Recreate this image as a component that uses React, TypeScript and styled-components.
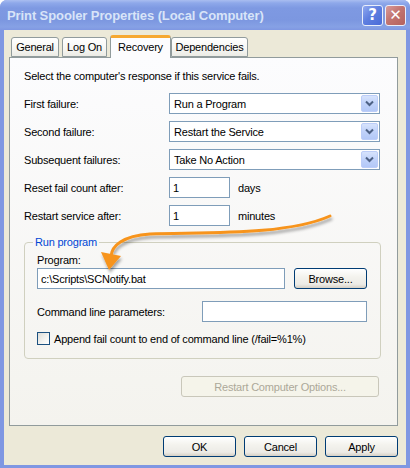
import React from "react";
import styled, { createGlobalStyle } from "styled-components";

const GlobalStyle = createGlobalStyle`
  html, body { margin: 0; padding: 0; background: #ffffff; }
  * { box-sizing: border-box; }
`;

const Window = styled.div`
  width: 410px;
  height: 468px;
  display: flex;
  flex-direction: column;
  background: #7f97e2;
  font-family: "Liberation Sans", Arial, sans-serif;
  font-size: 11px;
  letter-spacing: -0.2px;
  color: #000;
  overflow: hidden;
  border-radius: 7px 7px 0 0;
`;

const TitleBar = styled.div`
  height: 30px;
  flex: none;
  display: flex;
  align-items: center;
  padding: 0 4px 0 7px;
  background: linear-gradient(
    to bottom,
    #a9bdf0 0px,
    #8ea8ea 3px,
    #7e99e2 8px,
    #7c97e0 20px,
    #86a1e5 27px,
    #7f97e2 30px
  );
`;

const Title = styled.div`
  flex: 1;
  font-weight: bold;
  font-size: 13px;
  color: #d8e4f8;
  letter-spacing: -0.1px;
`;

const CaptionButton = styled.div<{ $close?: boolean }>`
  width: 21px;
  height: 21px;
  margin-left: 2px;
  border-radius: 3px;
  border: 1px solid #e9eefb;
  display: flex;
  align-items: center;
  justify-content: center;
  color: #fff;
  font-weight: bold;
  font-size: 15px;
  letter-spacing: 0;
  font-family: "DejaVu Sans", sans-serif;
  background: ${(p) =>
    p.$close
      ? "linear-gradient(135deg, #d99b9a 0%, #c27470 45%, #b4625e 100%)"
      : "linear-gradient(135deg, #90a9f0 0%, #5f7fe0 45%, #4a6bd8 100%)"};
`;

const Body = styled.div`
  flex: 1;
  margin: 0 4px 3px 4px;
  background: #ece9d8;
  padding: 5px 8px 0 5px;
  display: flex;
  flex-direction: column;
`;

const TabRow = styled.div`
  display: flex;
  align-items: flex-end;
  height: 22px;
  padding-left: 2px;
  position: relative;
  z-index: 1;
`;

const Tab = styled.div<{ $w: number; $active?: boolean }>`
  width: ${(p) => p.$w}px;
  height: ${(p) => (p.$active ? 23 : 20)}px;
  margin-right: ${(p) => (p.$active ? 0 : 3)}px;
  margin-bottom: ${(p) => (p.$active ? -1 : 0)}px;
  border: 1px solid #919b9c;
  border-bottom: ${(p) => (p.$active ? "none" : "1px solid #919b9c")};
  border-top: ${(p) => (p.$active ? "3px solid #f6a831" : "1px solid #919b9c")};
  border-radius: 3px 3px 0 0;
  display: flex;
  align-items: center;
  justify-content: center;
  padding-bottom: ${(p) => (p.$active ? 3 : 0)}px;
  background: ${(p) =>
    p.$active
      ? "#fcfcfe"
      : "linear-gradient(to bottom, #ffffff 0%, #f6f6f3 60%, #ecebe5 100%)"};
`;

const Panel = styled.div`
  width: 389px;
  height: 369px;
  border: 1px solid #919b9c;
  background: linear-gradient(to bottom, #fcfcfe 0%, #f4f3ee 100%);
  padding: 11px 17px 0 14px;
  display: flex;
  flex-direction: column;
`;

const Intro = styled.div`
  line-height: 14px;
  margin-bottom: 10px;
`;

const FormGrid = styled.div`
  display: grid;
  grid-template-columns: 145px 1fr;
  row-gap: 7px;
  align-items: center;
`;

const Label = styled.div`
  line-height: 14px;
`;

const Combo = styled.div`
  height: 21px;
  border: 1px solid #7f9db9;
  background: #fff;
  display: flex;
  align-items: center;
  padding: 1px 1px 1px 4px;
`;

const ComboText = styled.div`
  flex: 1;
`;

const ComboButton = styled.div`
  width: 17px;
  height: 17px;
  border: 1px solid #bccdf8;
  border-radius: 2px;
  background: linear-gradient(to bottom, #d7e3fc 0%, #c0d2fa 50%, #b3c8f7 100%);
  display: flex;
  align-items: center;
  justify-content: center;
`;

const InlineRow = styled.div`
  display: flex;
  align-items: center;
  gap: 8px;
`;

const TextInput = styled.div<{ $w: number }>`
  width: ${(p) => p.$w}px;
  height: 21px;
  border: 1px solid #7f9db9;
  background: #fff;
  display: flex;
  align-items: center;
  padding-left: 3px;
`;

const Group = styled.fieldset`
  margin: 9px 0 0 0;
  height: 124px;
  border: 1px solid #d0d0bf;
  border-radius: 4px;
  padding: 4px 13px 0 12px;
  display: flex;
  flex-direction: column;
`;

const Legend = styled.legend`
  color: #0046d5;
  padding: 0 2px;
  margin-left: -4px;
  line-height: 14px;
`;

const GroupLabel = styled.div`
  line-height: 14px;
  margin-bottom: 1px;
`;

const ProgramRow = styled.div`
  display: flex;
  align-items: center;
  gap: 9px;
`;

const CmdRow = styled.div`
  display: flex;
  align-items: center;
  justify-content: space-between;
  margin-top: 12px;
`;

const CheckRow = styled.div`
  display: flex;
  align-items: center;
  gap: 4px;
  margin-top: 10px;
`;

const CheckBox = styled.div`
  width: 13px;
  height: 13px;
  border: 1px solid #1c5180;
  background: linear-gradient(135deg, #dcdcd7 0%, #f4f4f1 60%, #ffffff 100%);
`;

const Button = styled.div<{ $w: number; $disabled?: boolean }>`
  width: ${(p) => p.$w}px;
  height: 21px;
  flex: none;
  border: 1px solid ${(p) => (p.$disabled ? "#c9c7ba" : "#003c74")};
  border-radius: 3px;
  display: flex;
  align-items: center;
  justify-content: center;
  color: ${(p) => (p.$disabled ? "#aca899" : "#000")};
  background: ${(p) =>
    p.$disabled
      ? "#f5f4ea"
      : "linear-gradient(to bottom, #ffffff 0%, #f4f3ee 40%, #ecebe6 80%, #d6d0c5 100%)"};
`;

const RestartRow = styled.div`
  display: flex;
  justify-content: flex-end;
  margin-top: 17px;
  padding-right: 1px;
`;

const Footer = styled.div`
  display: flex;
  justify-content: flex-end;
  gap: 8px;
  margin-top: 10px;
`;

const Overlay = styled.svg`
  position: absolute;
  left: 0;
  top: 0;
  pointer-events: none;
`;

const Stage = styled.div`
  position: relative;
  width: 410px;
  height: 468px;
`;

const Chevron = () => (
  <svg width="9" height="7" viewBox="0 0 9 7">
    <path d="M1 1.5 L4.5 5 L8 1.5" stroke="#4d6185" strokeWidth="2" fill="none" />
  </svg>
);

const failures = [
  { label: "First failure:", value: "Run a Program" },
  { label: "Second failure:", value: "Restart the Service" },
  { label: "Subsequent failures:", value: "Take No Action" },
];

const App: React.FC = () => {
  return (
    <Stage>
      <GlobalStyle />
      <Window>
        <TitleBar>
          <Title>Print Spooler Properties (Local Computer)</Title>
          <CaptionButton>?</CaptionButton>
          <CaptionButton $close>✕</CaptionButton>
        </TitleBar>
        <Body>
          <TabRow>
            <Tab $w={48}>General</Tab>
            <Tab $w={45}>Log On</Tab>
            <Tab $w={61} $active>
              Recovery
            </Tab>
            <Tab $w={77}>Dependencies</Tab>
          </TabRow>
          <Panel>
            <Intro>Select the computer's response if this service fails.</Intro>
            <FormGrid>
              {failures.map((f) => (
                <React.Fragment key={f.label}>
                  <Label>{f.label}</Label>
                  <Combo>
                    <ComboText>{f.value}</ComboText>
                    <ComboButton>
                      <Chevron />
                    </ComboButton>
                  </Combo>
                </React.Fragment>
              ))}
              <Label>Reset fail count after:</Label>
              <InlineRow>
                <TextInput $w={61}>1</TextInput>
                <span>days</span>
              </InlineRow>
              <Label>Restart service after:</Label>
              <InlineRow>
                <TextInput $w={61}>1</TextInput>
                <span>minutes</span>
              </InlineRow>
            </FormGrid>
            <Group>
              <Legend>Run program</Legend>
              <GroupLabel>Program:</GroupLabel>
              <ProgramRow>
                <TextInput $w={248}>c:\Scripts\SCNotify.bat</TextInput>
                <Button $w={73}>Browse...</Button>
              </ProgramRow>
              <CmdRow>
                <Label>Command line parameters:</Label>
                <TextInput $w={165} />
              </CmdRow>
              <CheckRow>
                <CheckBox />
                <span>Append fail count to end of command line (/fail=%1%)</span>
              </CheckRow>
            </Group>
            <RestartRow>
              <Button $w={198} $disabled>
                Restart Computer Options...
              </Button>
            </RestartRow>
          </Panel>
          <Footer>
            <Button $w={73}>OK</Button>
            <Button $w={73}>Cancel</Button>
            <Button $w={73}>Apply</Button>
          </Footer>
        </Body>
      </Window>
      <Overlay width="410" height="468" viewBox="0 0 410 468">
        <defs>
          <filter id="shadow" x="-20%" y="-20%" width="140%" height="160%">
            <feDropShadow dx="1" dy="3" stdDeviation="1.5" floodColor="#000" floodOpacity="0.35" />
          </filter>
        </defs>
        <g filter="url(#shadow)">
          <path
            d="M330 216 C 285 236 200 232 150 234 C 122 236 112 246 111 256"
            stroke="#f7941d"
            strokeWidth="3"
            fill="none"
            strokeLinecap="round"
          />
          <path d="M101 252 L121 256 L109 270 Z" fill="#f7941d" />
        </g>
      </Overlay>
    </Stage>
  );
};

export default App;
